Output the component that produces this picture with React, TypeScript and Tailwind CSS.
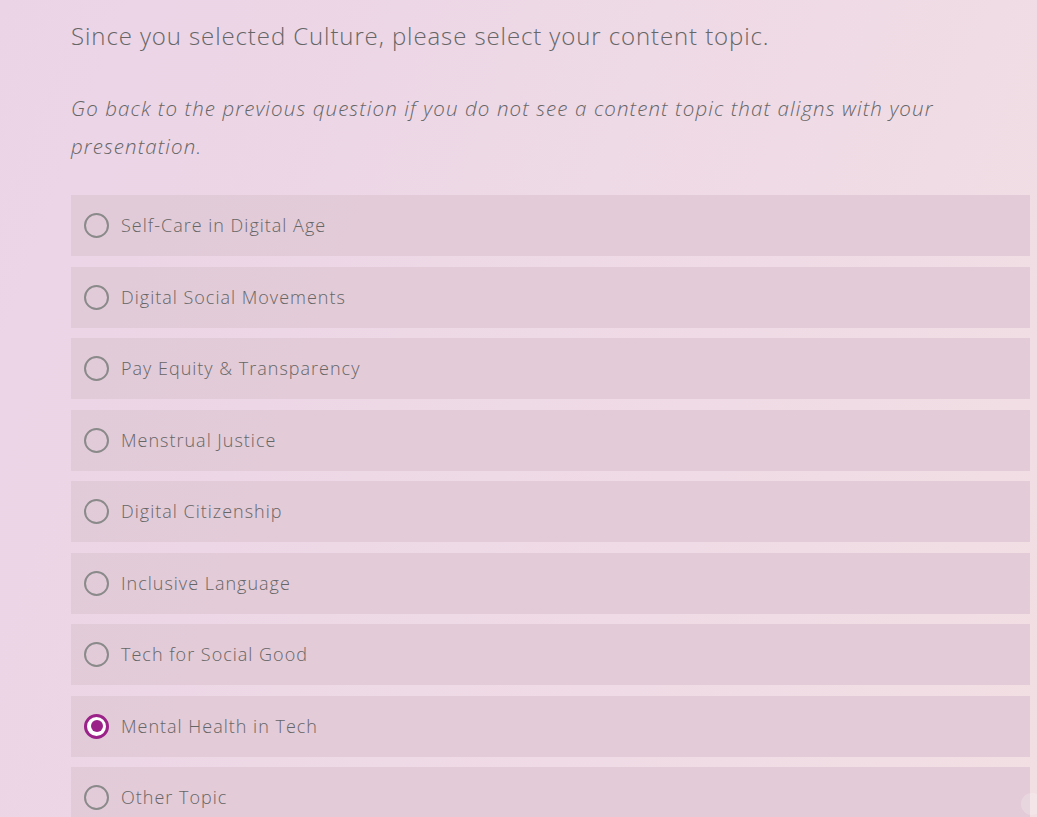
import { useState } from "react";

const topics = [
  "Self-Care in Digital Age",
  "Digital Social Movements",
  "Pay Equity & Transparency",
  "Menstrual Justice",
  "Digital Citizenship",
  "Inclusive Language",
  "Tech for Social Good",
  "Mental Health in Tech",
  "Other Topic",
];

const App = () => {
  const [selected, setSelected] = useState<string>("Mental Health in Tech");

  return (
    <div className="relative h-[817px] overflow-hidden bg-[linear-gradient(110deg,#ebd4e6_0%,#eed9e6_50%,#f2dfe3_100%)] font-['Open_Sans',sans-serif] text-[#666]">
      <div className="pl-[71px] pr-[7px] pt-[18px]">
        <h2 className="text-[24px] leading-[36px] font-light tracking-[0.9px]">
          Since you selected Culture, please select your content topic.
        </h2>
        <p className="mt-[35px] w-[900px] text-[20.5px] leading-[38px] italic font-light tracking-[1.1px]">
          Go back to the previous question if you do not see a content topic that aligns with your
          presentation.
        </p>
        <div className="mt-[30px] flex flex-col gap-[10.5px]">
          {topics.map((topic) => {
            const isOn = topic === selected;
            return (
              <label
                key={topic}
                onClick={() => setSelected(topic)}
                className="flex items-center h-[61px] bg-[#e1cad6]/90 pl-[13px] cursor-pointer"
              >
                {isOn ? (
                  <span className="w-[25px] h-[25px] rounded-full border-[3px] border-[#9b2289] bg-white flex items-center justify-center">
                    <span className="w-[12px] h-[12px] rounded-full bg-[#9b2289]" />
                  </span>
                ) : (
                  <span className="w-[25px] h-[25px] rounded-full border-[2px] border-[#8a8a8a]" />
                )}
                <span className="ml-[12px] text-[18px] font-light tracking-[1px]">{topic}</span>
              </label>
            );
          })}
        </div>
      </div>
      <span className="absolute right-[-6px] bottom-[2px] w-[22px] h-[22px] rounded-full bg-white/20" />
    </div>
  );
};

export default App;
